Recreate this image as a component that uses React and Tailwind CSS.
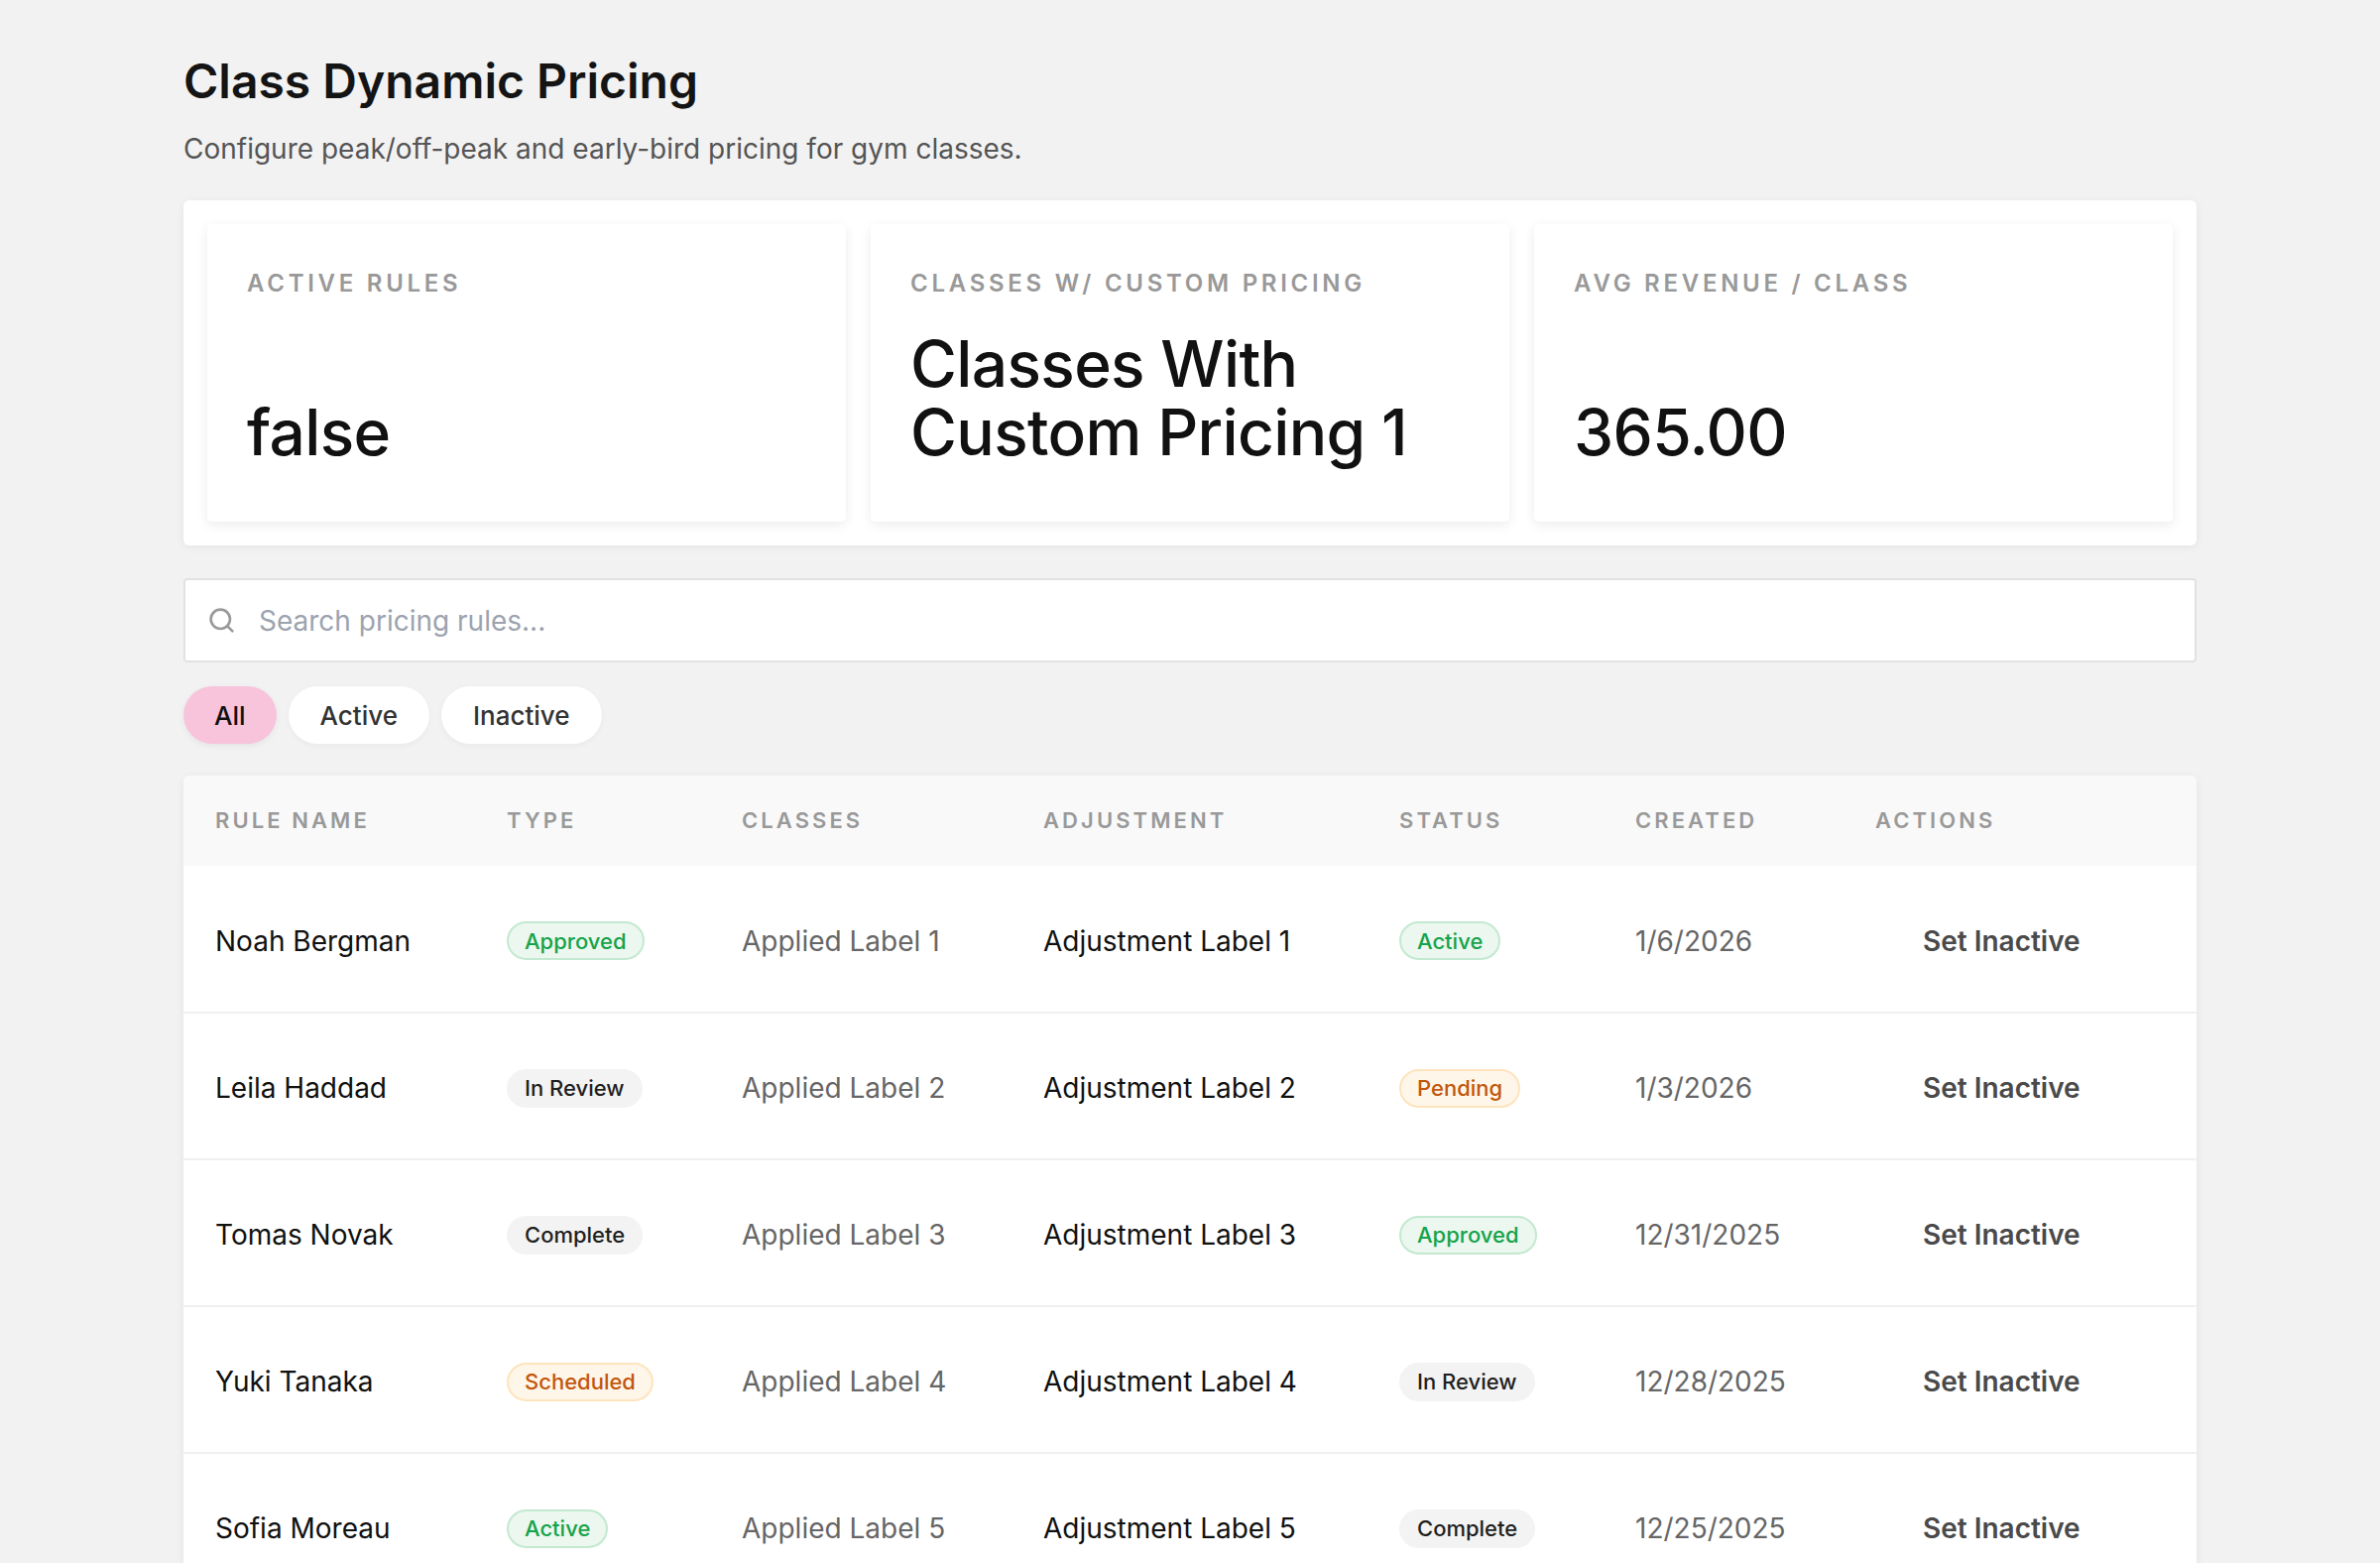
import { Search } from "lucide-react";

const stats = [
  { label: "Active Rules", value: "false" },
  { label: "Classes w/ Custom Pricing", value: "Classes With Custom Pricing 1" },
  { label: "Avg Revenue / Class", value: "365.00" },
];

const badgeStyles = {
  green: "bg-[#ebf7ef] border-[#c3e9d0] text-[#16a34a]",
  orange: "bg-[#fff6ea] border-[#fde4bd] text-[#c2570c]",
  gray: "bg-[#f3f3f3] border-[#f3f3f3] text-[#1f1f1f]",
};

const tones = {
  Approved: "green",
  Active: "green",
  Pending: "orange",
  Scheduled: "orange",
  "In Review": "gray",
  Complete: "gray",
};

const rows = [
  { name: "Noah Bergman", type: "Approved", n: 1, status: "Active", created: "1/6/2026" },
  { name: "Leila Haddad", type: "In Review", n: 2, status: "Pending", created: "1/3/2026" },
  { name: "Tomas Novak", type: "Complete", n: 3, status: "Approved", created: "12/31/2025" },
  { name: "Yuki Tanaka", type: "Scheduled", n: 4, status: "In Review", created: "12/28/2025" },
  { name: "Sofia Moreau", type: "Active", n: 5, status: "Complete", created: "12/25/2025" },
];

const columns = [
  { name: "Rule Name", w: "w-[294px]" },
  { name: "Type", w: "w-[237px]" },
  { name: "Classes", w: "w-[304px]" },
  { name: "Adjustment", w: "w-[359px]" },
  { name: "Status", w: "w-[238px]" },
  { name: "Created", w: "w-[242px]" },
  { name: "Actions", w: "" },
];

function Badge({ label }) {
  return (
    <span
      className={`inline-flex items-center rounded-full border-2 px-[16px] h-[39px] text-[22px] font-medium leading-none ${badgeStyles[tones[label]]}`}
    >
      {label}
    </span>
  );
}

export default function App() {
  return (
    <div className="min-h-screen bg-[#f2f2f2] font-['Inter',sans-serif] text-[#111]">
      <div className="mx-auto w-[2030px] pt-[52px] pb-[60px]">
        {/* Header */}
        <h1 className="text-[48px] font-semibold leading-[60px] text-[#141414]">
          Class Dynamic Pricing
        </h1>
        <p className="mt-[20px] text-[28px] leading-[36px] text-[#555]">
          Configure peak/off-peak and early-bird pricing for gym classes.
        </p>

        {/* Stats */}
        <div className="mt-[34px] rounded-[6px] bg-white p-[24px] shadow-[0_2px_10px_rgba(0,0,0,0.06)]">
          <div className="grid grid-cols-3 gap-[25px]">
            {stats.map((s) => (
              <div
                key={s.label}
                className="flex h-[300px] flex-col justify-between rounded-[5px] bg-white px-[40px] pt-[46px] pb-[56px] shadow-[0_3px_12px_rgba(0,0,0,0.08)]"
              >
                <div className="text-[24px] font-semibold uppercase leading-[28px] tracking-[0.155em] text-[#999]">
                  {s.label}
                </div>
                <div className="text-[64px] font-medium leading-[69px] tracking-[-0.01em] text-[#111]">
                  {s.value}
                </div>
              </div>
            ))}
          </div>
        </div>

        {/* Search */}
        <div className="mt-[33px] flex h-[85px] items-center rounded-[4px] border-2 border-[#e2e2e2] bg-white px-[22px]">
          <Search className="h-[29px] w-[29px] text-[#9a9a9a]" strokeWidth={2.2} />
          <input
            className="ml-[23px] flex-1 bg-transparent text-[28px] text-[#111] outline-none placeholder:text-[#9ca3af]"
            placeholder="Search pricing rules..."
          />
        </div>

        {/* Filters */}
        <div className="mt-[24px] flex gap-[12px]">
          <button className="h-[58px] rounded-full bg-[#f7c4db] px-[31px] text-[26px] font-medium text-[#111] shadow-[0_2px_6px_rgba(0,0,0,0.06)]">
            All
          </button>
          <button className="h-[58px] rounded-full bg-white px-[32px] text-[26px] font-medium text-[#333] shadow-[0_2px_6px_rgba(0,0,0,0.04)]">
            Active
          </button>
          <button className="h-[58px] rounded-full bg-white px-[32px] text-[26px] font-medium text-[#333] shadow-[0_2px_6px_rgba(0,0,0,0.04)]">
            Inactive
          </button>
        </div>

        {/* Table */}
        <div className="mt-[32px] overflow-hidden rounded-[6px] bg-white shadow-[0_2px_10px_rgba(0,0,0,0.06)]">
          <table className="w-full table-fixed border-collapse text-left">
            <thead className="bg-[#f9f9f9]">
              <tr>
                {columns.map((c) => (
                  <th
                    key={c.name}
                    className={`${c.w} h-[91px] pl-[32px] text-[22px] font-semibold uppercase tracking-[0.14em] text-[#999]`}
                  >
                    {c.name}
                  </th>
                ))}
              </tr>
            </thead>
            <tbody>
              {rows.map((r) => (
                <tr key={r.name} className="border-b-2 border-[#f0f0f0]">
                  <td className="h-[148px] pl-[32px] pt-[4px] text-[28px] text-[#111]">{r.name}</td>
                  <td className="pl-[32px] pt-[4px]">
                    <Badge label={r.type} />
                  </td>
                  <td className="pl-[32px] pt-[4px] text-[28px] text-[#666]">Applied Label {r.n}</td>
                  <td className="pl-[32px] pt-[4px] text-[28px] text-[#111]">Adjustment Label {r.n}</td>
                  <td className="pl-[32px] pt-[4px]">
                    <Badge label={r.status} />
                  </td>
                  <td className="pl-[32px] pt-[4px] text-[28px] text-[#666]">{r.created}</td>
                  <td className="pl-[32px] pt-[4px]">
                    <button className="px-[48px] text-[28px] font-semibold text-[#4a4a4a]">
                      Set Inactive
                    </button>
                  </td>
                </tr>
              ))}
            </tbody>
          </table>
        </div>
      </div>
    </div>
  );
}
